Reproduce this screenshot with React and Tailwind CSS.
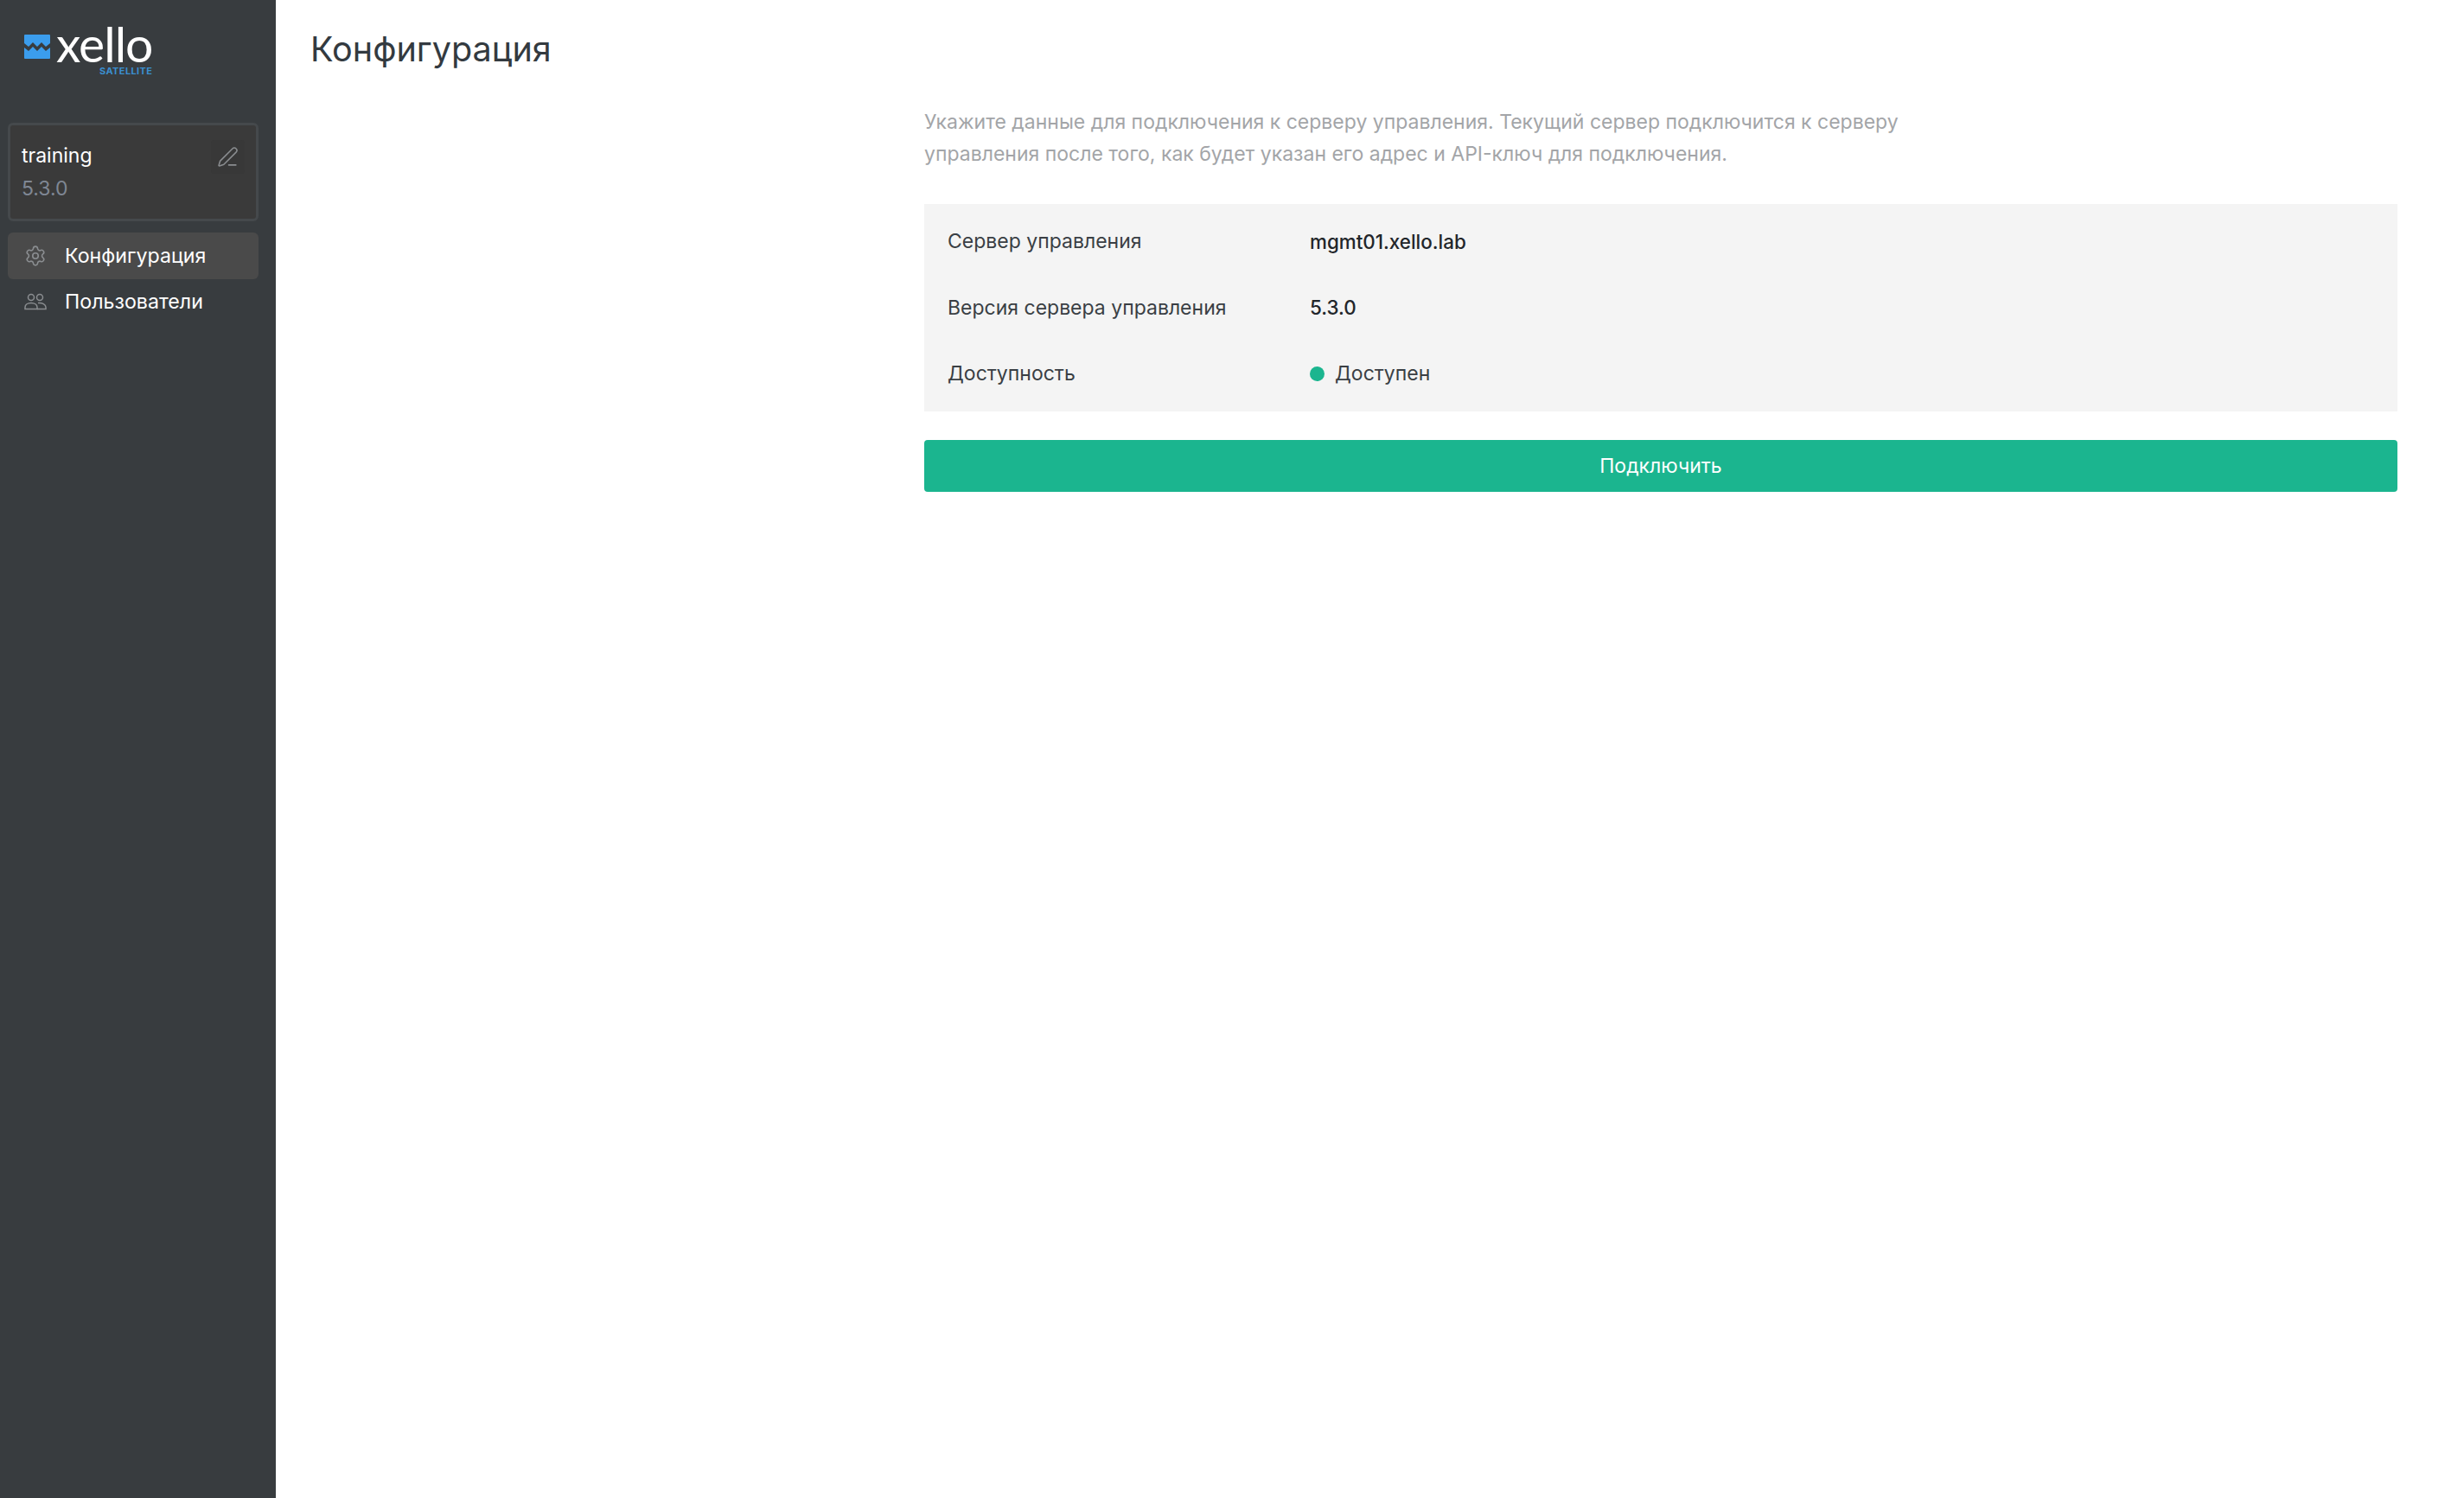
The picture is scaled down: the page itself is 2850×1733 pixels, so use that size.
import { Settings, PenLine } from 'lucide-react';

const rows = [
    { label: 'Сервер управления', value: 'mgmt01.xello.lab' },
    { label: 'Версия сервера управления', value: '5.3.0' },
];

const Logo = () => (
    <div className="flex items-start h-[142px] pl-[19px] pt-[27px]">
        <svg width="30" height="28" viewBox="0 0 30 28" className="mt-[13px] shrink-0">
            <rect width="30" height="28" rx="1" fill="#3b9ded" />
            <path
                d="M0 10 L5 14 L10 9 L15 14 L20 9 L25 14 L30 10 L30 15 L25 19 L20 14 L15 19 L10 14 L5 19 L0 15 Z"
                fill="#383c3f"
            />
        </svg>
        <div className="ml-[7px] flex flex-col items-end">
            <span className="font-['Lato',sans-serif] font-normal text-white text-[57px] leading-[46px] tracking-[-1px]">xello</span>
            <span className="font-['Inter',sans-serif] font-bold text-[#3b8fd0] text-[11px] leading-[12px] mt-[3px] tracking-[0.4px]">SATELLITE</span>
        </div>
    </div>
);

const UsersIcon = () => (
    <svg width="28" height="20" viewBox="0 0 28 20" fill="none" stroke="#8a8d90" strokeWidth="1.5">
        <circle cx="9" cy="5" r="3.5" />
        <circle cx="19" cy="5" r="3.5" />
        <path d="M2 18.5 v-2 c0-3 3-5 7-5 s7 2 7 5 v2 z" />
        <path d="M17 11.6 c5-.6 9 1.6 9 4.9 v2 h-10" />
    </svg>
);

const Sidebar = () => (
    <aside className="w-[319px] shrink-0 min-h-screen bg-[#383c3f] pl-[9px] pr-[20px]">
        <Logo />
        <div className="h-[114px] rounded-[6px] border-[3px] border-[#45494c] bg-[#3a3a3a] pl-[13px] pr-[13px] pt-[17px] flex justify-between items-start">
            <div>
                <p className="text-white text-[23px] leading-[36px]">training</p>
                <p className="text-[#7f8794] text-[23px] leading-[38px] mt-[1px]">5.3.0</p>
            </div>
            <div className="w-[39px] h-[39px] rounded-[4px] bg-[#383838] flex items-center justify-center">
                <PenLine className="w-[25px] h-[25px] text-[#8a8d90]" strokeWidth={1.5} />
            </div>
        </div>
        <nav className="mt-[13px]">
            <div className="h-[54px] rounded-[6px] bg-[#4a4a4a] flex items-center pl-[19px]">
                <Settings className="w-[26px] h-[26px] text-[#8a8d90]" strokeWidth={1.5} />
                <span className="ml-[21px] text-white text-[23.2px]">Конфигурация</span>
            </div>
            <div className="h-[52px] flex items-center pl-[18px]">
                <UsersIcon />
                <span className="ml-[20px] text-white text-[23.2px]">Пользователи</span>
            </div>
        </nav>
    </aside>
);

export default function App() {
    return (
        <div className="flex min-h-screen bg-white font-['Inter',sans-serif]">
            <Sidebar />
            <main className="flex-1 pl-[40px] pr-[77px]">
                <h1 className="pt-[29px] text-[39.6px] leading-[56px] font-normal text-[#333a40]">Конфигурация</h1>
                <div className="ml-[710px] mt-[38px]">
                    <p className="max-w-[1180px] text-[23px] leading-[36.5px] text-[#a3a5a8]">
                        Укажите данные для подключения к серверу управления. Текущий сервер подключится к серверу управления после того, как будет указан его адрес и API-ключ для подключения.
                    </p>
                    <div className="mt-[40px] h-[240px] bg-[#f4f4f4] px-[27px] py-[5.5px] flex flex-col text-[23px] text-[#3a3f44]">
                        {rows.map((row) => (
                            <div key={row.label} className="h-[76.5px] flex items-center">
                                <span className="w-[419px]">{row.label}</span>
                                <span className="font-medium text-[22.4px] text-[#22262a]">{row.value}</span>
                            </div>
                        ))}
                        <div className="h-[76.5px] flex items-center">
                            <span className="w-[419px]">Доступность</span>
                            <span className="w-[17px] h-[17px] rounded-full bg-[#1bb58f]" />
                            <span className="ml-[12px]">Доступен</span>
                        </div>
                    </div>
                    <button className="mt-[33px] w-full h-[60px] rounded-[4px] bg-[#1bb58f] text-white text-[23px]">
                        Подключить
                    </button>
                </div>
            </main>
        </div>
    );
}
